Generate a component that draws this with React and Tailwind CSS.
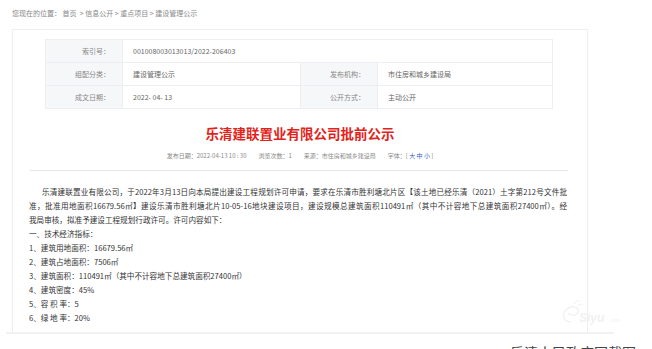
import React from "react";

const cjk = "font-['Microsoft_YaHei','Noto_Sans_CJK_SC',sans-serif]";

const InfoLabel = ({ children }) => (
  <div className="bg-[#f6f7f9] border-r border-b border-[#eceef1] flex items-center justify-end pr-[12px] text-[7px] text-[#888]">
    {children}
  </div>
);

const InfoValue = ({ children, className = "" }) => (
  <div className={`border-r border-b border-[#eceef1] flex items-center pl-[10px] text-[7px] text-[#666] ${className}`}>
    {children}
  </div>
);

const App = () => {
  return (
    <main className={`relative w-[652px] h-[349px] overflow-hidden bg-white ${cjk}`}>
      {/* breadcrumb */}
      <div className="pt-[9px] pl-[12px] text-[7px] leading-[9px] text-[#888]">
        您现在的位置：&nbsp;首页&nbsp; &gt; 信息公开 &gt; 重点项目 &gt; 建设管理公示
      </div>

      {/* page body */}
      <div className="mt-[11px] ml-[6px] w-[608px] border-b-2 border-[#f2f2f2]">
        <div className="ml-[6px] w-[576px] h-[303px] border border-b-0 border-[#eeeeee] overflow-hidden">
          {/* meta table */}
          <div className="mt-[9px] ml-[32px] w-[508px] grid grid-cols-[77px_178px_77px_1fr] auto-rows-[23px] border-t border-l border-[#eceef1]">
            <InfoLabel>索引号：</InfoLabel>
            <InfoValue className="col-span-3 text-[7.5px]">001008003013013/2022-206403</InfoValue>
            <InfoLabel>组配分类：</InfoLabel>
            <InfoValue>建设管理公示</InfoValue>
            <InfoLabel>发布机构：</InfoLabel>
            <InfoValue>市住房和城乡建设局</InfoValue>
            <InfoLabel>成文日期：</InfoLabel>
            <InfoValue className="text-[7.5px]">2022- 04- 13</InfoValue>
            <InfoLabel>公开方式：</InfoLabel>
            <InfoValue>主动公开</InfoValue>
          </div>

          {/* title */}
          <h1 className="mt-[15px] text-center text-[13.5px] leading-[18px] font-bold text-[#e2231a]">
            乐清建联置业有限公司批前公示
          </h1>
          <div className="mt-[10px] flex justify-center gap-[12px] text-[6px] leading-[8px] text-[#888]">
            <span>发布日期：2022-04-13 10 : 30</span>
            <span>浏览次数：1</span>
            <span>来源：市住房和城乡建设局</span>
            <span>
              字体：[ <span className="text-[#2d57c8]">大 中 小</span> ]
            </span>
          </div>
          <div className="mt-[10px] ml-[17px] mr-[19px] border-t border-[#e6e6e6]"></div>

          {/* content */}
          <div className="mt-[14px] ml-[16px] w-[538px] text-[7.6px] leading-[14px] text-[#333] whitespace-nowrap">
            <p className="pl-[13px] text-justify [text-align-last:justify]">
              乐清建联置业有限公司，于2022年3月13日向本局提出建设工程规划许可申请，要求在乐清市胜利塘北片区【该土地已经乐清（2021）土字第212号文件批
            </p>
            <p className="text-justify [text-align-last:justify]">
              准，批准用地面积16679.56㎡】建设乐清市胜利塘北片10-05-16地块建设项目，建设规模总建筑面积110491㎡（其中不计容地下总建筑面积27400㎡）。经
            </p>
            <p>我局审核，拟准予建设工程规划行政许可。许可内容如下：</p>
            <p>一、技术经济指标：</p>
            <p>1、建筑用地面积：16679.56㎡</p>
            <p>2、建筑占地面积：7506㎡</p>
            <p>3、建筑面积：110491㎡（其中不计容地下总建筑面积27400㎡）</p>
            <p>4、建筑密度：45%</p>
            <p>5、容 积 率：5</p>
            <p>6、绿 地 率：20%</p>
          </div>
        </div>
      </div>

      {/* caption */}
      <div className="ml-[510px] mt-[9px] text-[14px] leading-[18px] text-[#444] whitespace-nowrap">
        乐清人民政府网截图
      </div>

      {/* watermark */}
      <svg className="absolute left-[558px] top-[297px]" width="70" height="30" viewBox="0 0 70 30">
        <path d="M13 25c-8 0-10-8-4-13 5-4 12-2 11 3-1 4-8 4-10 1" fill="none" stroke="#f1f1f1" strokeWidth="1.4" />
        <path d="M16 7c1-3 3-4 5-3M19 9c2-2 4-2 6-1" fill="none" stroke="#f1f1f1" strokeWidth="1" />
        <text x="21" y="25" fontSize="12" fontStyle="italic" fontWeight="bold" fill="#f1f1f1" fontFamily="Liberation Sans, sans-serif">
          Siyu
        </text>
        <text x="51" y="25" fontSize="5" fill="#f1f1f1" fontFamily="Liberation Sans, sans-serif">
          .com
        </text>
      </svg>
    </main>
  );
};

export default App;
